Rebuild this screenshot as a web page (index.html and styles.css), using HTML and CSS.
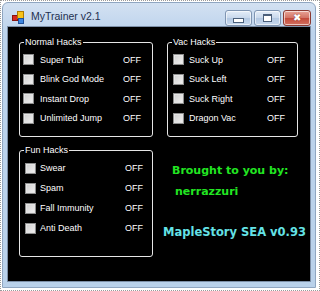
FILE: index.html
```html
<!DOCTYPE html>
<html lang="en">

<head>
    <meta charset="UTF-8">
    <title>MyTrainer v2.1</title>
    <link rel="stylesheet" href="styles.css">
</head>

<body>
    <div class="page">
        <div class="window">
            <div class="titlebar">
                <svg class="app-icon" width="13" height="13" viewBox="0 0 13 13">
                    <rect x="0.5" y="4.5" width="5" height="5" fill="#d62a22" stroke="#8a1410"/>
                    <rect x="5.5" y="0.5" width="6" height="7" fill="#f7c21a" stroke="#b07a00"/>
                    <rect x="6.5" y="7.5" width="5" height="5" fill="#3d86e0" stroke="#1d4f9a"/>
                </svg>
                <span class="title">MyTrainer v2.1</span>
                <div class="caption-buttons">
                    <div class="cap-btn"><span class="min-glyph"></span></div>
                    <div class="cap-btn"><span class="max-glyph"></span></div>
                    <div class="cap-btn close"><span class="close-glyph">&#x2716;</span></div>
                </div>
            </div>

            <div class="client">
                <fieldset class="group normal">
                    <legend>Normal Hacks</legend>
                    <div class="row"><span class="check"></span><span>Super Tubi</span><span>OFF</span></div>
                    <div class="row"><span class="check"></span><span>Blink God Mode</span><span>OFF</span></div>
                    <div class="row"><span class="check"></span><span>Instant Drop</span><span>OFF</span></div>
                    <div class="row"><span class="check"></span><span>Unlimited Jump</span><span>OFF</span></div>
                </fieldset>

                <fieldset class="group vac">
                    <legend>Vac Hacks</legend>
                    <div class="row"><span class="check"></span><span>Suck Up</span><span>OFF</span></div>
                    <div class="row"><span class="check"></span><span>Suck Left</span><span>OFF</span></div>
                    <div class="row"><span class="check"></span><span>Suck Right</span><span>OFF</span></div>
                    <div class="row"><span class="check"></span><span>Dragon Vac</span><span>OFF</span></div>
                </fieldset>

                <fieldset class="group fun">
                    <legend>Fun Hacks</legend>
                    <div class="row"><span class="check"></span><span>Swear</span><span>OFF</span></div>
                    <div class="row"><span class="check"></span><span>Spam</span><span>OFF</span></div>
                    <div class="row"><span class="check"></span><span>Fall Immunity</span><span>OFF</span></div>
                    <div class="row"><span class="check"></span><span>Anti Death</span><span>OFF</span></div>
                </fieldset>

                <div class="credits">
                    <div class="brought">Brought to you by:</div>
                    <div class="author">nerrazzuri</div>
                    <div class="version">MapleStory SEA v0.93</div>
                </div>
            </div>
        </div>
    </div>
</body>

</html>
```

FILE: styles.css
```css
body {
    margin: 0;
    background-color: #ffffff;
    font-family: "Liberation Sans", Arial, sans-serif;
}

.page {
    width: 320px;
    height: 291px;
    box-sizing: border-box;
    border: 1px dotted #9a9a9a;
    padding: 1px 0 0 1px;
}

.window {
    width: 314px;
    height: 286px;
    box-sizing: border-box;
    border: 1px solid #8fa6c1;
    border-radius: 6px 6px 0 0;
    background: linear-gradient(#d3e1f2, #bcd3ec 30px, #b9d1ea);
    padding: 0 4px 5px 4px;
    display: flex;
    flex-direction: column;
}

.titlebar {
    height: 23px;
    display: flex;
    align-items: flex-start;
}

.app-icon {
    margin: 8px 0 0 5px;
}

.title {
    margin: 7px 0 0 6px;
    font-size: 10.5px;
    line-height: 12px;
    color: #1e3050;
}

.caption-buttons {
    margin: 7px 0 0 auto;
    display: flex;
    gap: 2px;
}

.cap-btn {
    width: 25px;
    height: 14px;
    border: 1px solid #7f95b2;
    border-radius: 3px;
    background: linear-gradient(#e4edf8, #c8d8ec 50%, #b3c8e2 51%, #c7d9ee);
    display: flex;
    align-items: center;
    justify-content: center;
    box-shadow: inset 0 0 0 1px rgba(255, 255, 255, 0.6);
}

.cap-btn.close {
    width: 26px;
    border-color: #8a3a32;
    background: linear-gradient(#e8a396, #d27264 50%, #c2493a 51%, #d3705f);
}

.min-glyph {
    width: 9px;
    height: 3px;
    margin-top: 5px;
    background: #ffffff;
    border: 1px solid #4b5f7a;
}

.max-glyph {
    width: 7px;
    height: 5px;
    border: 1px solid #4b5f7a;
    border-top-width: 2px;
    background: #ffffff;
}

.close-glyph {
    color: #ffffff;
    font-size: 10px;
    line-height: 10px;
    text-shadow: 0 0 1px #6a1a12;
}

.client {
    flex: 1;
    background-color: #000000;
    border: 1px solid #7d90a8;
    display: grid;
    grid-template-columns: 134px 131px;
    grid-template-rows: auto 1fr;
    column-gap: 14px;
    row-gap: 8px;
    padding: 10px 0 0 11px;
    align-items: start;
}

.group {
    margin: 0;
    padding: 2px 0 8px 3px;
    border: 1px solid #e6e6e6;
    border-radius: 3px;
    min-width: 0;
    color: #ffffff;
    font-size: 9px;
}

.group legend {
    margin-left: 1px;
    padding: 0 1px;
    line-height: 11px;
    color: #ffffff;
}

.row {
    height: 19.5px;
    display: grid;
    grid-template-columns: 11px 77px auto;
    column-gap: 6px;
    align-items: center;
    white-space: nowrap;
}

.vac .row {
    grid-template-columns: 11px 73px auto;
    column-gap: 5px;
    padding-left: 2px;
}

.fun {
    padding-bottom: 18px;
}

.fun .row {
    height: 20px;
    grid-template-columns: 11px 81px auto;
    column-gap: 4px;
    padding-left: 2px;
}

.check {
    width: 11px;
    height: 11px;
    box-sizing: border-box;
    border: 1px solid #8e8f8f;
    background: linear-gradient(135deg, #cfcfcf, #f2f2f2);
    box-shadow: inset 0 0 0 1px #e4e4e4;
}

.credits {
    display: flex;
    flex-direction: column;
    align-items: flex-start;
    font-family: "Comic Sans MS", "DejaVu Sans", sans-serif;
    font-weight: bold;
    white-space: nowrap;
    padding: 17px 0 0 5px;
}

.brought {
    color: #22e622;
    font-size: 11px;
    line-height: 18px;
}

.author {
    color: #22e622;
    font-size: 11px;
    line-height: 18px;
    margin: 3px 0 0 3px;
}

.version {
    color: #64e2e6;
    font-size: 11.5px;
    line-height: 20px;
    margin: 21px 0 0 -9px;
}
```
